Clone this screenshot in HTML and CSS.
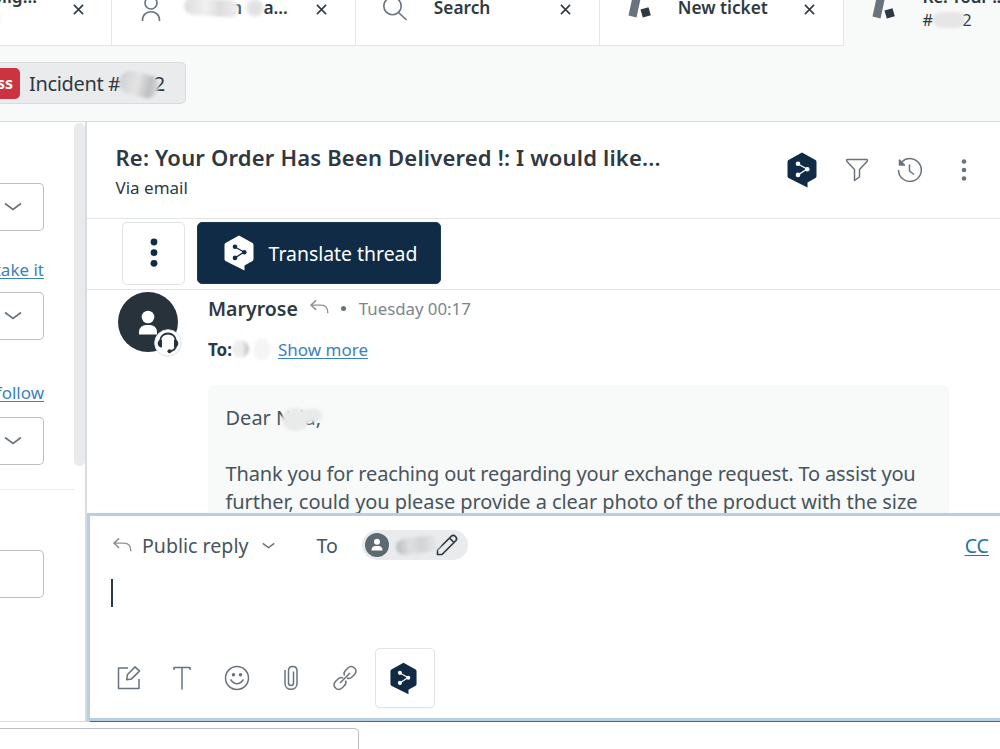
FILE: index.html
```html
<!DOCTYPE html>
<html lang="en">
<head>
<meta charset="utf-8">
<title>Incident</title>
<link rel="stylesheet" href="styles.css">
</head>
<body>
<svg class="defs" width="0" height="0">
  <symbol id="logo" viewBox="0 0 30 36"><path class="hex" d="M15 .5 28.5 8Q29.5 8.700 29.500 10V24Q29.500 25.500 28.500 26L20.500 30.500V35.500L1.500 26Q.5 25.400.5 24V10Q.5 8.700 1.500 8Z"/><path class="net" d="m11 12 9 5-9 6"/><circle class="dot" cx="11" cy="11.700" r="2.300"/><circle class="dot" cx="20.300" cy="17.200" r="2.300"/><circle class="dot" cx="11" cy="22.900" r="2.300"/></symbol>
  <symbol id="close" viewBox="0 0 12 12"><path d="m1 1 10 10M11 1 1 11"/></symbol>
  <symbol id="chevron" viewBox="0 0 18 9"><path d="m1 1.500 8 6 8-6"/></symbol>
  <symbol id="reply" viewBox="0 0 20 16"><path d="M6.500 1 1 6l5.500 5M1 6h10.500Q18.800 6 18.800 14.500"/></symbol>
  <symbol id="ticket" viewBox="0 0 26 24"><path fill="#68737d" d="m6.500 0 8 2-4 18.500-8-2z"/><path fill="#2f3941" d="m14.500 12.500 8-2.300 2.300 8-8 2.300z"/></symbol>
</svg>

<nav class="tabs">
  <div class="tab"><span></span><div class="tab-text first"><b>Complig...</b><small><i class="smudge s-edge"></i></small></div><svg class="x"><use href="#close"/></svg></div>
  <div class="tab"><svg class="user-ico" viewBox="0 0 20 26"><circle cx="10" cy="7" r="6"/><path d="M1.500 25v-1c0-11 17-11 17 0v1"/></svg><div class="tab-text"><b class="masked"><i class="smudge s-name"></i>n&nbsp;<i class="smudge s-last"></i>a...</b></div><svg class="x"><use href="#close"/></svg></div>
  <div class="tab"><svg class="search-ico" viewBox="0 0 26 26"><circle cx="10.500" cy="10" r="8.700"/><path d="m16.500 16.500 8 7.500"/></svg><div class="tab-text"><b>Search</b></div><svg class="x"><use href="#close"/></svg></div>
  <div class="tab"><svg class="ticket-ico"><use href="#ticket"/></svg><div class="tab-text"><b>New ticket</b></div><svg class="x"><use href="#close"/></svg></div>
  <div class="tab active"><svg class="ticket-ico"><use href="#ticket"/></svg><div class="tab-text"><b>Re: Your !...</b><small>#<i class="smudge s-num"></i>2</small></div></div>
</nav>

<div class="crumbs"><div class="crumb"><span class="badge">In progress</span><span class="crumb-text">Incident #<i class="smudge s-id"></i>2</span></div></div>

<main class="workspace">
  <aside class="side">
    <div class="fields">
      <div class="select"><svg class="chev"><use href="#chevron"/></svg></div>
      <a class="link take">take it</a>
      <div class="select"><svg class="chev"><use href="#chevron"/></svg></div>
      <a class="link follow">follow</a>
      <div class="select"><svg class="chev"><use href="#chevron"/></svg></div>
      <hr>
      <div class="select input"></div>
    </div>
    <div class="scrollbar"></div>
  </aside>

  <section class="thread">
    <header class="subject">
      <div class="subject-text"><h1>Re: Your Order Has Been Delivered !: I would like...</h1><p>Via email</p></div>
      <div class="actions">
        <svg class="logo dark"><use href="#logo"/></svg>
        <svg class="line" width="24" height="24" viewBox="0 0 24 24"><path d="M2.500 1.500h19q1.500 0 .5 2l-7.500 8v7.500L9.500 22.500v-11L2 3.500q-1-2 .5-2Z"/></svg>
        <svg class="line" width="26" height="26" viewBox="0 0 26 26"><path d="M1.500 13A11.400 11.400 0 1 0 5 4.800M12.500 7.500V14l4.500 3.500"/><path class="solid" d="M2.500 3v5h5z"/></svg>
        <svg class="dots" width="6" height="24" viewBox="0 0 6 24"><circle cx="3" cy="3.500" r="2.300"/><circle cx="3" cy="12" r="2.300"/><circle cx="3" cy="20.500" r="2.300"/></svg>
      </div>
    </header>
    <div class="toolbar">
      <button class="more"><svg width="8" height="30" viewBox="0 0 8 30"><circle cx="4" cy="4" r="3.400"/><circle cx="4" cy="14.700" r="3.400"/><circle cx="4" cy="25.300" r="3.400"/></svg></button>
      <button class="translate"><svg class="logo light"><use href="#logo"/></svg><span>Translate thread</span></button>
    </div>
    <article class="message">
      <div class="avatar">
        <svg width="60" height="60" viewBox="0 0 60 60"><circle cx="30" cy="30" r="30" fill="#28323b"/><circle cx="30" cy="25" r="6.300" fill="#fff"/><path d="M21 42.500v-3q1-6.500 7-6.500h4q6 0 7 6.500v3z" fill="#fff"/></svg>
        <svg class="agent" width="28" height="28" viewBox="0 0 28 28"><circle cx="14" cy="14" r="13.300" fill="#fff" stroke="#dfe2e4"/><path d="M6 12C6.500 2 21.500 2 22 12M22 16c0 3.500-2.500 5.500-6 6.500" fill="none" stroke="#28323b" stroke-width="1.800"/><path d="M8 10.500v8q-4.300-.3-4.300-4t4.300-4M20 10.500v8q4.300-.3 4.300-4t-4.300-4" fill="#28323b"/><circle cx="15.500" cy="22.300" r="2" fill="#28323b"/></svg>
      </div>
      <div class="message-main">
        <div class="from"><strong>Maryrose</strong><svg class="reply"><use href="#reply"/></svg><i class="bullet"></i><time>Tuesday 00:17</time></div>
        <div class="to"><strong>To:</strong><i class="smudge s-to1"></i><i class="smudge s-to2"></i><a class="link">Show more</a></div>
        <div class="bubble"><p>Dear N<i class="smudge s-dear"></i>ia,</p><p class="l1">Thank you for reaching out regarding your exchange request. To assist you</p><p class="l2">further, could you please provide a clear photo of the product with the size</p></div>
      </div>
    </article>
    <section class="composer">
      <div class="compose-head">
        <svg class="reply"><use href="#reply"/></svg><span class="mode">Public reply</span><svg class="chev small"><use href="#chevron"/></svg>
        <span class="to-label">To</span>
        <div class="chip"><svg width="24" height="24" viewBox="0 0 24 24"><circle cx="12" cy="12" r="12" fill="#5c6970"/><circle cx="12" cy="8.800" r="3" fill="#fff"/><path d="M6.500 17.500q0-4.500 4-4.500h3q4 0 4 4.500z" fill="#fff"/></svg><i class="smudge s-chip"></i><svg class="pencil" width="22" height="22" viewBox="0 0 22 22"><path d="M1.500 20.500V16L15.500 2q2-1.500 4 .5t.5 4L6 20.500zM13.500 4l4.500 4.500"/></svg></div>
        <a class="link cc">CC</a>
      </div>
      <div class="editor"><i class="caret"></i></div>
      <div class="tools">
        <svg class="line" width="24" height="24" viewBox="0 0 24 24"><path d="M11 2H1.500v20.500h20.500V13M10.500 8.500 18 .9l4.500 4.200-8 7.800-4.800.8z"/></svg>
        <svg class="line" width="18" height="24" viewBox="0 0 18 24"><path d="M1 4V1.500h16V4M9 1.500v22"/></svg>
        <svg class="line" width="26" height="26" viewBox="0 0 26 26"><circle cx="13" cy="13" r="11.500"/><path d="M6.500 14.500q6.500 8.500 13 0"/><circle class="solid" cx="9.500" cy="9.700" r="1"/><circle class="solid" cx="16.500" cy="9.700" r="1"/></svg>
        <svg class="line" width="14" height="26" viewBox="0 0 14 26"><path d="M1 5v13.500c0 7.700 12 7.700 12 0V6c0-6-8.500-6-8.500 0v12c0 3.300 5 3.300 5 0V6.500"/></svg>
        <svg class="line" width="26" height="26" viewBox="0 0 26 26"><path d="M12.500 10.500c-1-2-.5-3.500 1-5l2.500-2.500c4.500-4 10.500 2 6.500 6.500l-2.500 2.500c-1.500 1.500-3 2-5 1M13.500 15.500c1 2 .5 3.500-1 5L10 23c-4.500 4-10.500-2-6.500-6.500L6 14c1.500-1.500 3-2 5-1M8 18 18 8"/></svg>
        <button class="logo-btn"><svg class="logo dark"><use href="#logo"/></svg></button>
      </div>
    </section>
  </section>
</main>
<footer class="footer"><div class="macro"></div></footer>
</body>
</html>
```
FILE: styles.css
```css
* { box-sizing: border-box; }
html { overflow: hidden; }
body { margin: 0; width: 1000px; height: 749px; overflow: hidden; background: #fff; color: #2f3941; font-family: "Noto Sans", "Open Sans", sans-serif; display: flex; flex-direction: column; }
h1, p { margin: 0; font-weight: 400; }
svg { display: block; flex: none; overflow: visible; }
.defs { position: absolute; }
button { padding: 0; background: #fff; font: inherit; display: flex; align-items: center; justify-content: center; }
.link { color: #3b82bd; text-decoration: underline; text-underline-offset: 2px; text-decoration-thickness: 1px; }
.line { fill: none; stroke: #68737d; stroke-width: 1.5; stroke-linejoin: round; }
.solid { fill: #68737d; }

.tabs { height: 73px; margin: -27px 0 0 -132px; width: 1132px; overflow: hidden; display: flex; flex: none; background: #f8f9f9; }
.tab { width: 243.900px; flex: none; display: grid; grid-template-columns: 78px 110px 44px; align-items: center; background: #fff; border-right: 1px solid #e4e7e8; border-bottom: 1px solid #e4e7e8; }
.tab.active { background: transparent; border: 0; width: 157px; grid-template-columns: 79px 78px; }
.tab > svg { justify-self: center; }
.tab-text { font-size: 17.300px; line-height: 23px; white-space: nowrap; display: flex; flex-direction: column; padding-bottom: 3px; }
.tab-text b { font-weight: 600; }
.active b { letter-spacing: -.45px; }
.tab-text small { font-size: 16.500px; display: flex; align-items: center; height: 23px; }
.tab-text.first { align-items: flex-end; padding-right: 19px; }
.first small { width: 40px; }
.x { width: 11px; height: 11px; fill: none; stroke: #2f3941; stroke-width: 1.700; }
.user-ico { width: 20px; height: 26px; fill: none; stroke: #68737d; stroke-width: 1.600; }
.search-ico { width: 26px; height: 26px; fill: none; stroke: #68737d; stroke-width: 1.600; }
.ticket-ico { width: 26px; height: 24px; }
.masked { display: flex; align-items: center; margin-left: -6px; }

.smudge { display: inline-block; flex: none; border-radius: 50%; background: #e6e6e6; filter: blur(1.500px); }
.s-edge { width: 8px; height: 14px; margin-left: -5px; }
.s-name { width: 55px; height: 17px; margin-right: -8px; border-radius: 10px; transform: rotate(4deg); background: linear-gradient(90deg, #ddd, #f0f0f0 40%, #ddd 65%, #efefef); }
.s-last { width: 18px; height: 18px; margin-right: -1px; background: radial-gradient(#ddd, #eee); }
.s-num { width: 32px; height: 16px; border-radius: 9px; margin-right: -3px; }
.s-id { width: 40px; height: 23px; border-radius: 12px; transform: rotate(14deg); margin: 3px -5px 0 -2px; background: linear-gradient(90deg, #cfd0d1, #e4e4e4 45%, #bcbec0 78%, #dcdddd); }
.s-to1 { width: 17px; height: 18px; background: linear-gradient(90deg, #eee 60%, #bbb); }
.s-to2 { width: 18px; height: 22px; margin-left: 4px; background: #f5f5f5; }
.s-dear { position: relative; z-index: 1; width: 27px; height: 23px; margin: 0 -10px 0 -9px; vertical-align: -6px; background: #e9eaea; }
.s-dear::after { content: ""; position: absolute; left: 18px; top: 1px; width: 22px; height: 13px; border-radius: 7px; background: #e9eaea; }
.s-chip { width: 45px; height: 16px; margin-left: 7px; border-radius: 10px; transform: rotate(-8deg); background: linear-gradient(90deg, #b9bcbe, #dedfdf 30%, #d2d3d4 60%, #efefef); }

.crumbs { height: 76px; flex: none; background: #f8f9f9; border-bottom: 1px solid #d8dcde; padding-top: 16px; }
.crumb { width: 186px; height: 42px; background: #e9ebed; border: 1px solid #d8dcde; border-left: 0; border-radius: 0 5px 5px 0; display: flex; align-items: center; }
.badge { width: 20px; height: 31px; border-radius: 0 5px 5px 0; background: #cc3340; color: #fff; font-size: 16px; line-height: 31px; font-weight: 700; display: flex; justify-content: flex-end; padding-right: 7px; white-space: nowrap; flex: none; overflow: hidden; }
.crumb-text { margin-left: 9px; font-size: 20px; white-space: nowrap; display: flex; align-items: center; letter-spacing: -.35px; }

.workspace { height: 600px; flex: none; display: grid; grid-template-columns: 87px 913px; }
.side { display: grid; grid-template-columns: 74px 11px; border-right: 2px solid #d8dcde; border-bottom: 1px solid #d8dcde; }
.scrollbar { margin-top: 1px; height: 343px; background: #e8eaec; border-radius: 5px; }
.fields { padding-top: 61px; display: flex; flex-direction: column; min-width: 0; }
.select { width: 44px; height: 48px; border: 1px solid #b8bec3; border-left: 0; border-radius: 0 5px 5px 0; display: flex; align-items: center; padding: 0 0 1px 4px; flex: none; }
.chev { width: 18px; height: 9px; fill: none; stroke: #68737d; stroke-width: 1.600; }
.fields .link { width: 44px; display: flex; justify-content: flex-end; white-space: nowrap; font-size: 17px; line-height: 24px; text-decoration: underline; flex: none; }
.fields .take { margin: 27px 0 10px; }
.fields .follow { margin: 41px 0 12px; }
hr { width: 74px; height: 1px; border: 0; background: #e9ebed; margin: 24px 0 60px; flex: none; }

.thread { display: flex; flex-direction: column; min-width: 0; }
.subject { height: 97px; flex: none; border-bottom: 1px solid #e2e5e7; display: flex; justify-content: space-between; padding: 19px 33px 0 28.500px; }
.subject h1 { font-size: 22px; line-height: 32px; font-weight: 600; letter-spacing: .18px; white-space: nowrap; }
.subject p { font-size: 17px; line-height: 29px; }
.actions { display: flex; align-items: center; height: 58px; gap: 28px; }
.logo.dark { --a: #0f2b46; --b: #fff; }
.logo.light { --a: #fff; --b: #0f2b46; }
.logo { width: 30px; height: 36px; }
.hex { fill: var(--a); }
.net { fill: none; stroke: var(--b); stroke-width: 1.300; }
.dot { fill: var(--b); }
.dots { fill: #68737d; margin-left: 10px; }

.toolbar { height: 71px; flex: none; border-bottom: 1px solid #e2e5e7; display: flex; gap: 12px; padding: 3px 0 0 35px; }
.more { width: 63px; height: 63px; border: 1px solid #e0e4ea; border-radius: 5px; fill: #0f2b46; padding-bottom: 2px; }
.translate { width: 244px; height: 62px; border: 1px solid #1c3855; border-radius: 5px; background: #0f2b46; color: #fff; font-size: 19.400px; gap: 15px; padding-left: 3px; white-space: nowrap; }

.message { height: 223px; flex: none; overflow: hidden; display: flex; padding: 2px 0 0 31px; }
.avatar { position: relative; width: 90px; flex: none; }
.agent { position: absolute; left: 36px; top: 37px; }
.message-main { width: 741px; }
.from { height: 33px; display: flex; align-items: center; font-size: 19.500px; white-space: nowrap; }
.from strong { font-weight: 600; }
.reply { width: 19px; height: 16px; fill: none; stroke: #8b949b; stroke-width: 1.500; }
.from .reply { margin: 0 0 3px 12px; }
.bullet { width: 5px; height: 5px; border-radius: 50%; background: #68737d; margin: 0 13px 0 12px; }
.from time { font-size: 16.800px; color: #7b858d; }
.to { height: 48px; display: flex; align-items: center; font-size: 17px; white-space: nowrap; }
.to strong { font-weight: 700; }
.to .link { margin-left: 7px; }
.bubble { margin-top: 12px; height: 160px; background: #f8f9f9; border-radius: 6px 6px 0 0; padding: 19px 0 0 17.500px; font-size: 20px; line-height: 28px; color: #49545c; white-space: nowrap; }
.bubble p { height: 28px; }
.bubble .l1 { margin-top: 28px; letter-spacing: -.17px; }
.bubble .l2 { letter-spacing: -.07px; }

.composer { height: 209px; flex: none; border: 3px solid #b6cfe7; border-right: 0; border-bottom: 0; display: flex; flex-direction: column; }
.composer::after { content: ""; margin-top: auto; height: 4px; background: linear-gradient(#b6cfe7 0 3px, #1f73b7 3px); }
.compose-head { height: 58px; display: flex; align-items: center; padding-left: 23px; font-size: 19.600px; color: #49545c; white-space: nowrap; }
.mode { margin-left: 10px; }
.chev.small { width: 13px; height: 7px; margin-left: 14px; stroke-width: 2; }
.to-label { margin-left: 41px; }
.chip { width: 106px; height: 30px; margin-left: 24px; border-radius: 15px; background: #e9ebed; display: flex; align-items: center; padding-left: 3px; flex: none; }
.pencil { margin-left: -5px; fill: none; stroke: #2f3941; stroke-width: 1.700; stroke-linejoin: round; }
.cc { margin-left: auto; margin-right: 11px; color: #1f73b7; }
.editor { height: 74px; padding: 5px 0 0 21px; flex: none; }
.caret { display: block; width: 2px; height: 28px; background: #2f3941; }
.tools { height: 60px; display: flex; align-items: center; padding-left: 27px; flex: none; }
.tools svg:nth-child(2) { margin-left: 32px; }
.tools svg:nth-child(3) { margin-left: 33px; }
.tools svg:nth-child(4) { margin-left: 34px; }
.tools svg:nth-child(5) { margin-left: 34px; }
.logo-btn { width: 60px; height: 60px; margin-left: 17px; border: 1px solid #e0e3e8; border-radius: 5px; box-shadow: 0 1px 2px #0000000a; }
.logo-btn .logo { width: 27px; height: 33px; margin-right: 3px; }
.footer { flex: 1; padding-top: 6px; overflow: hidden; }
.macro { width: 359px; height: 40px; border: 1px solid #b8bec3; border-left: 0; border-radius: 0 5px 0 0; }
```
